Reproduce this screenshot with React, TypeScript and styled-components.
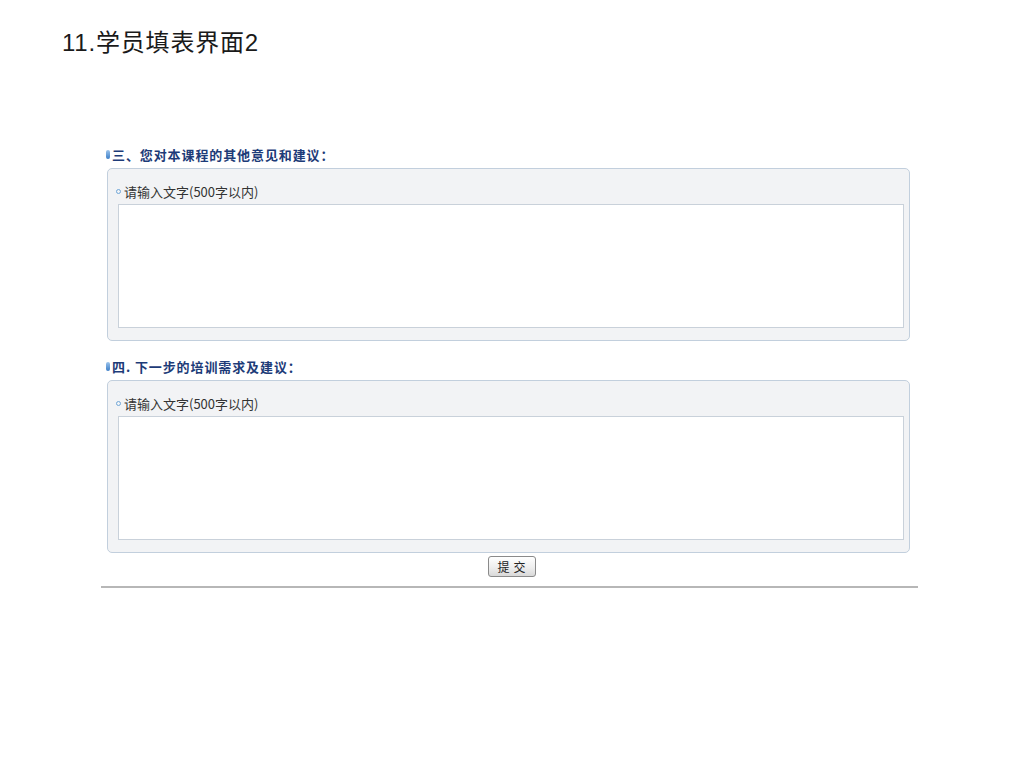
import React from "react";
import styled, { createGlobalStyle } from "styled-components";

const Global = createGlobalStyle`
  html, body { margin: 0; padding: 0; background: #ffffff; }
  body { font-family: "Liberation Sans", "Noto Sans CJK SC", sans-serif; }
`;

const Page = styled.div`
  width: 1024px;
  height: 768px;
  overflow: hidden;
  background: #fff;
`;

const Title = styled.h1`
  margin: 29px 0 0 62px;
  font-family: "Liberation Sans", "Noto Sans CJK SC", sans-serif;
  font-weight: normal;
  font-size: 24px;
  letter-spacing: 0.8px;
  line-height: 28px;
  color: #1a1a1a;
`;

const Form = styled.div`
  margin: 87px 0 0 101px;
  width: 817px;
  display: flex;
  flex-direction: column;
`;

const Section = styled.section<{ $first?: boolean }>`
  display: flex;
  flex-direction: column;
  margin-top: ${(p) => (p.$first ? "0" : "15px")};
`;

const Heading = styled.div`
  display: flex;
  align-items: center;
  height: 20px;
  padding-left: 5px;
  font-family: "Noto Sans CJK SC", sans-serif;
  font-size: 13px;
  letter-spacing: 0.9px;
  font-weight: bold;
  color: #1d3b78;
  margin-bottom: 4px;
`;

const Pill = styled.span`
  display: inline-block;
  width: 4px;
  height: 9px;
  border-radius: 2px;
  background: linear-gradient(180deg, #9cc4ec, #3d7fc8);
  margin-right: 2px;
`;

const Panel = styled.div`
  margin: 0 8px 0 6px;
  border: 1px solid #c2cfdd;
  border-radius: 5px;
  background: #f2f3f5;
  padding: 13px 5px 12px 10px;
  display: flex;
  flex-direction: column;
  gap: 4px;
`;

const Label = styled.div`
  display: flex;
  align-items: center;
  height: 18px;
  font-family: "Noto Sans CJK SC", sans-serif;
  font-size: 13px;
  color: #333;
  margin-left: -2px;
`;

const Dot = styled.span`
  display: inline-block;
  width: 3px;
  height: 3px;
  border: 1px solid #6fa6d8;
  border-radius: 50%;
  margin-right: 3px;
`;

const TextArea = styled.textarea`
  box-sizing: border-box;
  width: 786px;
  height: 124px;
  border: 1px solid #c9d1da;
  background: #fff;
  resize: none;
  outline: none;
  margin: 0;
  padding: 2px;
  font-family: "Noto Sans CJK SC", sans-serif;
  font-size: 12px;
`;

const ButtonRow = styled.div`
  display: flex;
  justify-content: center;
  margin-top: 3px;
  padding-left: 4px;
`;

const Submit = styled.button`
  width: 48px;
  height: 21px;
  padding: 0;
  border: 1px solid #8a8a8a;
  border-radius: 3px;
  background: linear-gradient(180deg, #ffffff 0%, #ececec 60%, #d9d9d9 100%);
  font-family: "Noto Sans CJK SC", sans-serif;
  font-size: 12px;
  color: #222;
  letter-spacing: 4px;
  text-indent: 4px;
  line-height: 19px;
`;

const Rule = styled.hr`
  margin: 9px 0 0 0;
  border: none;
  height: 2px;
  background: #b7b7b7;
`;

const FeedbackSection: React.FC<{ title: string; first?: boolean }> = ({ title, first }) => (
  <Section $first={first}>
    <Heading>
      <Pill />
      {title}
    </Heading>
    <Panel>
      <Label>
        <Dot />
        请输入文字(500字以内)
      </Label>
      <TextArea />
    </Panel>
  </Section>
);

export default function App() {
  return (
    <Page>
      <Global />
      <Title>11.学员填表界面2</Title>
      <Form>
        <FeedbackSection first title="三、您对本课程的其他意见和建议：" />
        <FeedbackSection title="四. 下一步的培训需求及建议：" />
        <ButtonRow>
          <Submit>提交</Submit>
        </ButtonRow>
        <Rule />
      </Form>
    </Page>
  );
}
